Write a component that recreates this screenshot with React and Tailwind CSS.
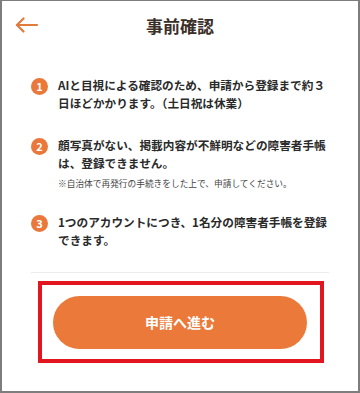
import React from 'react';

const items = [
  { n: '1', lines: ['AIと目視による確認のため、申請から登録まで約３', '日ほどかかります。（土日祝は休業）'] },
  {
    n: '2',
    lines: ['顔写真がない、掲載内容が不鮮明などの障害者手帳', 'は、登録できません。'],
    note: '※自治体で再発行の手続きをした上で、申請してください。',
  },
  { n: '3', lines: ['1つのアカウントにつき、1名分の障害者手帳を登録', 'できます。'] },
];

function BackArrow() {
  return (
    <svg width="24" height="16" viewBox="0 0 24 16" fill="none" stroke="#e27a3c" strokeWidth="2.2" strokeLinecap="round" strokeLinejoin="round">
      <path d="M2 8h20" />
      <path d="M8.5 1.5L2 8l6.5 6.5" />
    </svg>
  );
}

export default function App() {
  return (
    <div
      className="w-[360px] h-[393px] bg-white border-t border-l-2 border-r-2 border-b-2 border-[#7d7d7d] flex flex-col"
      style={{ fontFamily: '"Noto Sans CJK JP", "Noto Sans", sans-serif' }}
    >
      {/* ヘッダー */}
      <div className="h-[48px] grid grid-cols-[1fr_auto_1fr] items-center">
        <div className="pl-[13px] pt-[-1px] flex items-center">
          <BackArrow />
        </div>
        <h1 className="text-[17px] font-bold text-[#3a2f28] leading-none">事前確認</h1>
        <div />
      </div>

      {/* 注意事項 */}
      <div className="px-[29px] pt-[27px] flex flex-col">
        {items.map((item, i) => (
          <div key={item.n} className={i === 0 ? '' : i === 1 ? 'mt-[24px]' : 'mt-[23px]'}>
            <div className="flex gap-[10px]">
              <div className="w-[17px] h-[17px] mt-[2px] shrink-0 rounded-full bg-[#e9783a] flex items-center justify-center text-white text-[11px] font-bold leading-none">
                {item.n}
              </div>
              <p className="text-[11.65px] leading-[18px] font-bold text-[#2a2a2a] whitespace-nowrap">
                {item.lines[0]}
                <br />
                {item.lines[1]}
              </p>
            </div>
            {item.note && (
              <p className="ml-[27px] mt-[6px] text-[8.7px] leading-[12px] text-[#444] whitespace-nowrap">{item.note}</p>
            )}
          </div>
        ))}
        <div className="mt-[23px] h-px bg-[#ebebeb]" />
      </div>

      {/* 申請ボタン */}
      <div className="mt-[8px] ml-[36px] w-[286px] h-[82px] border-4 border-[#e1161f] pt-[11px] pl-[11px]">
        <button className="w-[254px] h-[53px] rounded-full bg-[#eb7a3a] text-white text-[14px] font-bold">
          申請へ進む
        </button>
      </div>
    </div>
  );
}
